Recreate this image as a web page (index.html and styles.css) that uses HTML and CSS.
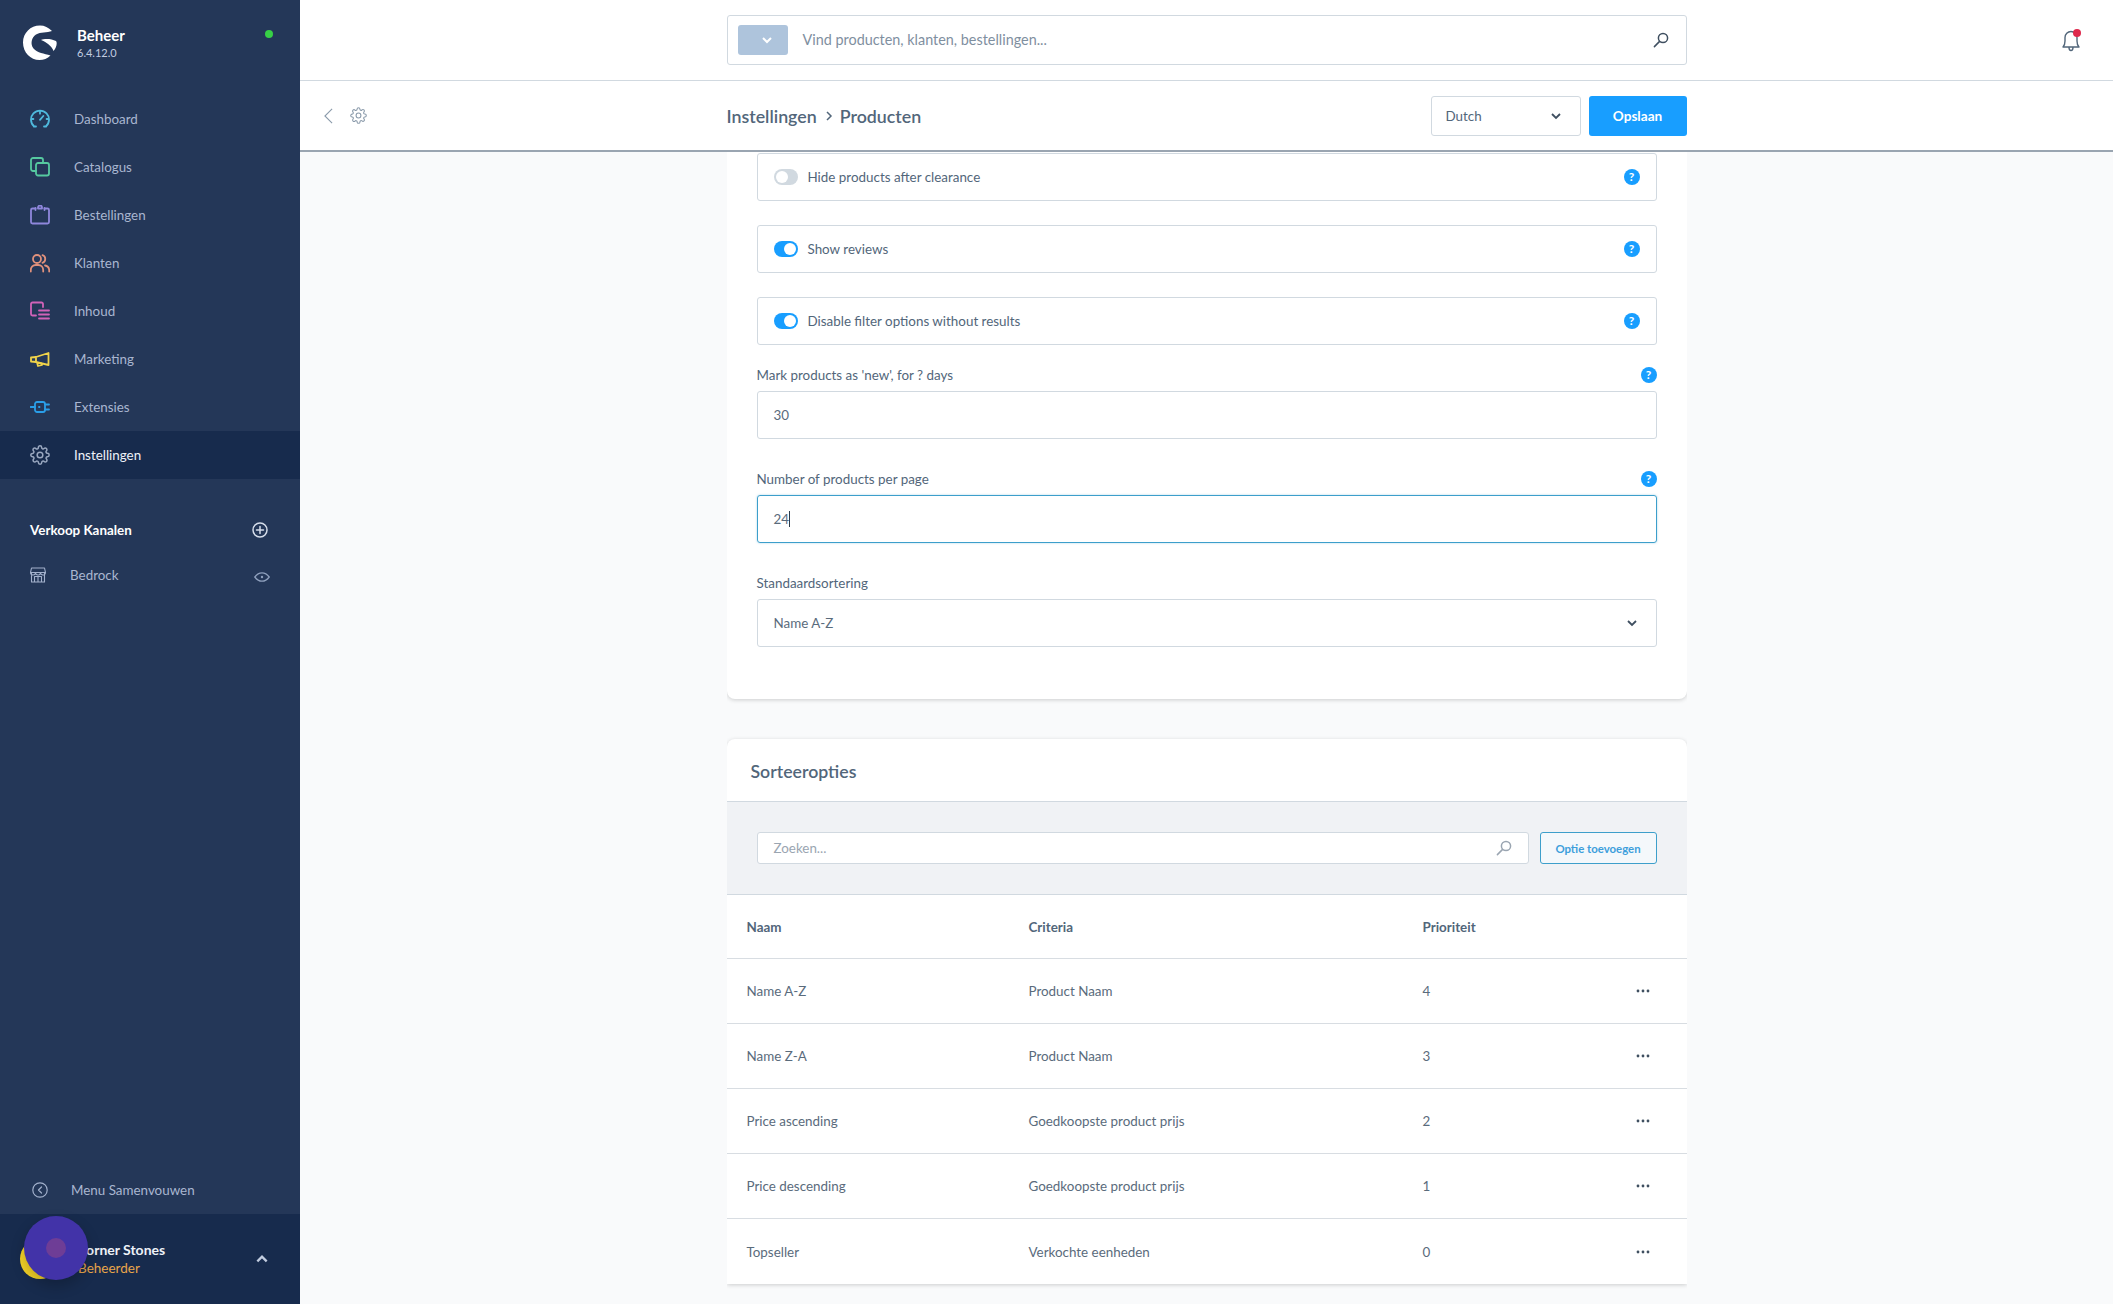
FILE: index.html
```html
<!DOCTYPE html>
<html lang="nl">
<head>
<meta charset="utf-8">
<title>Instellingen - Producten</title>
<link rel="stylesheet" href="styles.css">
</head>
<body>
<svg class="defs" width="0" height="0" aria-hidden="true">
  <symbol id="gear" viewBox="0 0 24 24"><circle cx="12" cy="12" r="3.4"/><path d="M19.4 15a1.65 1.65 0 0 0 .33 1.82l.06.06a2 2 0 0 1 0 2.83 2 2 0 0 1-2.83 0l-.06-.06a1.65 1.65 0 0 0-1.82-.33 1.65 1.65 0 0 0-1 1.51V21a2 2 0 0 1-2 2 2 2 0 0 1-2-2v-.09A1.65 1.65 0 0 0 9 19.4a1.65 1.65 0 0 0-1.82.33l-.06.06a2 2 0 0 1-2.83 0 2 2 0 0 1 0-2.83l.06-.06a1.65 1.65 0 0 0 .33-1.82 1.65 1.65 0 0 0-1.51-1H3a2 2 0 0 1-2-2 2 2 0 0 1 2-2h.09A1.65 1.65 0 0 0 4.6 9a1.65 1.65 0 0 0-.33-1.82l-.06-.06a2 2 0 0 1 0-2.83 2 2 0 0 1 2.83 0l.06.06a1.65 1.65 0 0 0 1.82.33H9a1.65 1.65 0 0 0 1-1.51V3a2 2 0 0 1 2-2 2 2 0 0 1 2 2v.09a1.65 1.65 0 0 0 1 1.51 1.65 1.65 0 0 0 1.82-.33l.06-.06a2 2 0 0 1 2.83 0 2 2 0 0 1 0 2.83l-.06.06a1.65 1.65 0 0 0-.33 1.82V9a1.65 1.65 0 0 0 1.51 1H21a2 2 0 0 1 2 2 2 2 0 0 1-2 2h-.09a1.65 1.65 0 0 0-1.51 1z"/></symbol>
  <symbol id="chev" viewBox="0 0 12 12"><path d="M2 4l4 4 4-4"/></symbol>
  <symbol id="mag" viewBox="0 0 16 16"><circle cx="10" cy="6" r="4.6"/><path d="M6.6 9.4L1.4 14.6"/></symbol>
  <symbol id="dots" viewBox="0 0 14 4"><circle cx="2" cy="2" r="1.4"/><circle cx="7" cy="2" r="1.4"/><circle cx="12" cy="2" r="1.4"/></symbol>
</svg>

<div class="app">
  <aside class="sidebar">
    <div class="brand">
      <svg class="logo" viewBox="0 0 34 35" aria-hidden="true"><path d="M29 6C25.500 2.500 21.500 .5 17 .5 7.500 .5 0 8 0 17.500 0 27.500 7.500 35 16.500 35 20.500 35 24.500 33.500 27.500 30.500 21 28.500 14.500 28 10.500 23.500 7 19 8.500 12.500 13 9.500 17.500 6.800 24 8 29 6Z"/><path d="M18 15C21 13.400 28.500 13.500 33 16 34.500 17.500 33.500 23 30.500 26 28.500 20.500 23 17 18 15Z"/></svg>
      <div class="brand-text">
        <div class="brand-name">Beheer</div>
        <div class="brand-version">6.4.12.0</div>
      </div>
      <span class="status-dot"></span>
    </div>
    <nav class="nav">
      <a class="nav-item"><svg class="nav-icon i-cyan" viewBox="0 0 20 20"><path d="M4.200 17.500A9 9 0 1 1 15.800 17.500M3.800 17.500H6M14 17.500h2.200M10 10.800l3.300-3.800M10 3.200v1.500M3.400 10H2M18 10h-1.400"/></svg><span>Dashboard</span></a>
      <a class="nav-item"><svg class="nav-icon i-teal" viewBox="0 0 20 20"><path d="M6 14H3a2 2 0 0 1-2-2V3a2 2 0 0 1 2-2h8a2 2 0 0 1 2 2v3"/><rect x="6" y="6" width="13" height="12.500" rx="2"/></svg><span>Catalogus</span></a>
      <a class="nav-item"><svg class="nav-icon i-purple" viewBox="0 0 20 20"><path d="M5.500 3.500H2.500a1.500 1.500 0 0 0-1.500 1.500v12a1.500 1.500 0 0 0 1.500 1.500h15a1.500 1.500 0 0 0 1.500-1.500V5a1.500 1.500 0 0 0-1.500-1.500h-3M8 3.500h4M8 3.500V2.500a2 2 0 0 1 4 0v1"/><path d="M5.500 3v2M14.500 3v2"/></svg><span>Bestellingen</span></a>
      <a class="nav-item"><svg class="nav-icon i-orange" viewBox="0 0 20 20"><circle cx="7" cy="6" r="4"/><path d="M.8 18.500v-1.500a5 5 0 0 1 5-5h2.400a5 5 0 0 1 5 5v1.500M12.500 2.200a4 4 0 0 1 0 7.600M15 12.500a5 5 0 0 1 4.200 4.500v1.500"/></svg><span>Klanten</span></a>
      <a class="nav-item"><svg class="nav-icon i-pink" viewBox="0 0 20 20"><path d="M13 6V3a1.500 1.500 0 0 0-1.500-1.500H2.500A1.500 1.500 0 0 0 1 3v10a1.500 1.500 0 0 0 1.500 1.500H6M9 9.500h10M9 13.500h10M9 17.500h10"/></svg><span>Inhoud</span></a>
      <a class="nav-item"><svg class="nav-icon i-yellow" viewBox="0 0 20 20"><path d="M1 8.500l5-.5 12.500-4v12L6 13l-5-.5zM6 8v5M7 13.500l1 3.500 4-1-.8-2"/></svg><span>Marketing</span></a>
      <a class="nav-item"><svg class="nav-icon i-blue" viewBox="0 0 20 20"><rect x="5" y="5" width="10" height="10" rx="2"/><path d="M.5 10H5M15 7.500h4M15 12.500h4"/><path d="M9 10h.5"/></svg><span>Extensies</span></a>
      <a class="nav-item active"><svg class="nav-icon i-gear"><use href="#gear"/></svg><span>Instellingen</span></a>
    </nav>
    <div class="channels-head">
      <span>Verkoop Kanalen</span>
      <svg class="plus" viewBox="0 0 16 16"><circle cx="8" cy="8" r="7"/><path d="M8 4.500v7M4.500 8h7"/></svg>
    </div>
    <div class="channel">
      <svg class="store" viewBox="0 0 16 16"><path d="M1.500 1h13l1 4.500H.5zM1.500 5.500v9.500h13V5.500M.5 5.500a2.500 2.500 0 0 0 5 0 2.500 2.500 0 0 0 5 0 2.500 2.500 0 0 0 5 0M4.500 15V9.500h7V15M8 9.500V15"/></svg>
      <span class="channel-name">Bedrock</span>
      <svg class="eye" viewBox="0 0 16 10"><path d="M.8 5C3 2 5.300.8 8 .8S13 2 15.200 5C13 8 10.700 9.200 8 9.200S3 8 .8 5z"/><circle cx="8" cy="5" r="1.200" class="eye-pupil"/></svg>
    </div>
    <div class="spacer"></div>
    <div class="collapse">
      <svg class="collapse-icon" viewBox="0 0 16 16"><circle cx="8" cy="8" r="7.200"/><path d="M9.500 5L6.500 8l3 3"/></svg>
      <span>Menu Samenvouwen</span>
    </div>
    <div class="user">
      <span class="avatar"></span>
      <div class="user-text">
        <div class="user-name">Corner Stones</div>
        <div class="user-role">Beheerder</div>
      </div>
      <svg class="user-chev" viewBox="0 0 12 12"><path d="M2 8l4-4 4 4"/></svg>
    </div>
    <div class="touch"><span class="touch-core"></span></div>
  </aside>

  <main class="main">
    <header class="topbar">
      <div></div>
      <div class="search">
        <span class="search-type"><svg class="search-type-chev"><use href="#chev"/></svg></span>
        <span class="search-text">Vind producten, klanten, bestellingen...</span>
        <svg class="icon-mag dark"><use href="#mag"/></svg>
      </div>
      <div class="bell-cell">
        <span class="bell">
          <svg class="bell-svg" viewBox="0 0 20 24"><path d="M2 19c1.500-1.500 2-3 2-6V9.500a6 6 0 0 1 12 0V13c0 3 .5 4.500 2 6zM8 19.500c0 4 4 4 4 0"/></svg>
          <span class="bell-dot"></span>
        </span>
      </div>
    </header>

    <div class="smartbar">
      <div class="smart-left">
        <svg class="back" viewBox="0 0 12 20"><path d="M10 2L2 10l8 8"/></svg>
        <svg class="smart-gear"><use href="#gear"/></svg>
      </div>
      <div class="smart-center">
        <div class="crumbs">
          <span>Instellingen</span>
          <svg class="crumb-sep" viewBox="0 0 8 12"><path d="M2 2l4 4-4 4"/></svg>
          <span class="crumb-current">Producten</span>
        </div>
        <div class="lang"><span>Dutch</span><svg class="chev"><use href="#chev"/></svg></div>
        <button class="save">Opslaan</button>
      </div>
      <div></div>
    </div>

    <div class="content">
      <section class="card card-form">
        <div class="switch-box"><span class="toggle"></span><span class="switch-label">Hide products after clearance</span><span class="help">?</span></div>
        <div class="switch-box"><span class="toggle on"></span><span class="switch-label">Show reviews</span><span class="help">?</span></div>
        <div class="switch-box"><span class="toggle on"></span><span class="switch-label">Disable filter options without results</span><span class="help">?</span></div>

        <div class="field first">
          <div class="field-label"><span>Mark products as 'new', for ? days</span><span class="help">?</span></div>
          <div class="input"><span>30</span></div>
        </div>
        <div class="field">
          <div class="field-label"><span>Number of products per page</span><span class="help">?</span></div>
          <div class="input focus"><span class="caret">24</span></div>
        </div>
        <div class="field">
          <div class="field-label"><span>Standaardsortering</span></div>
          <div class="input select"><span>Name A-Z</span><svg class="chev"><use href="#chev"/></svg></div>
        </div>
      </section>

      <section class="card card-table">
        <h2 class="card-title">Sorteeropties</h2>
        <div class="toolbar">
          <div class="tool-search"><span>Zoeken...</span><svg class="icon-mag"><use href="#mag"/></svg></div>
          <button class="add">Optie toevoegen</button>
        </div>
        <div class="row head"><span>Naam</span><span>Criteria</span><span>Prioriteit</span><span></span></div>
        <div class="row"><span>Name A-Z</span><span>Product Naam</span><span>4</span><svg class="dots"><use href="#dots"/></svg></div>
        <div class="row"><span>Name Z-A</span><span>Product Naam</span><span>3</span><svg class="dots"><use href="#dots"/></svg></div>
        <div class="row"><span>Price ascending</span><span>Goedkoopste product prijs</span><span>2</span><svg class="dots"><use href="#dots"/></svg></div>
        <div class="row"><span>Price descending</span><span>Goedkoopste product prijs</span><span>1</span><svg class="dots"><use href="#dots"/></svg></div>
        <div class="row last"><span>Topseller</span><span>Verkochte eenheden</span><span>0</span><svg class="dots"><use href="#dots"/></svg></div>
      </section>
    </div>
  </main>
</div>
</body>
</html>
```
FILE: styles.css
```css
* { box-sizing: border-box; }
html, body { margin: 0; height: 100%; overflow: hidden; }
body { font-family: "Lato", "Noto Sans", sans-serif; font-size: 13.4px; color: #52667a; background: #f9fafb; }
.defs { position: absolute; }
svg { display: block; flex: none; }

.app { display: flex; height: 1304px; }

/* sidebar */
.sidebar { position: relative; width: 300px; flex: none; display: flex; flex-direction: column; background: #243758; color: #a9b6d0; }
.brand { height: 95px; display: flex; padding: 25px 0 0 23px; position: relative; }
.logo { width: 34px; height: 35px; fill: #fff; }
.brand-text { margin-left: 20px; }
.brand-name { color: #fff; font-size: 15px; font-weight: 700; line-height: 20px; }
.brand-version { color: #c2cde0; font-size: 11px; line-height: 14px; margin-top: 1px; }
.status-dot { position: absolute; left: 265px; top: 30px; width: 8px; height: 8px; border-radius: 50%; background: #37d046; }

.nav { display: flex; flex-direction: column; }
.nav-item { height: 48px; display: flex; align-items: center; padding-left: 30px; gap: 24px; }
.nav-item.active { background: #172b4d; color: #eef2f8; }
.nav-icon { width: 20px; height: 20px; fill: none; stroke-width: 1.8; stroke-linecap: round; stroke-linejoin: round; }
.i-cyan { stroke: #4fb9dd; }
.i-teal { stroke: #56c9a0; }
.i-purple { stroke: #8f87dc; }
.i-orange { stroke: #e0917c; }
.i-pink { stroke: #d163b8; }
.i-yellow { stroke: #f0d34a; }
.i-blue { stroke: #2a9ee8; }
.i-gear { stroke: #9aa8c0; }

.channels-head { margin-top: 39px; height: 24px; padding: 0 32px 0 30px; display: flex; justify-content: space-between; align-items: center; color: #fff; font-weight: 700; }
.plus { width: 16px; height: 16px; fill: none; stroke: #d6deeb; stroke-width: 1.5; stroke-linecap: round; }
.channel { margin-top: 21px; height: 24px; padding: 0 30px; display: flex; align-items: center; }
.store { width: 16px; height: 16px; fill: none; stroke: #a3b1cc; stroke-width: 1.1; stroke-linejoin: round; }
.channel-name { margin-left: 24px; flex: 1; }
.eye { width: 16px; height: 10px; fill: none; stroke: #8fa0bd; stroke-width: 1.3; margin-top: 3px; }
.eye-pupil { fill: #8fa0bd; stroke: none; }
.spacer { flex: 1; }

.collapse { height: 48px; display: flex; align-items: center; padding-left: 32px; gap: 23px; }
.collapse-icon { width: 16px; height: 16px; fill: none; stroke: #a3b1cc; stroke-width: 1.2; stroke-linecap: round; stroke-linejoin: round; }
.user { height: 90px; background: #172b4d; display: flex; align-items: center; padding: 0 31px 0 20px; }
.avatar { width: 40px; height: 40px; border-radius: 50%; background: #f5d327; margin-top: 0; }
.user-text { margin-left: 17px; flex: 1; }
.user-name { color: #eef2f8; font-weight: 700; font-size: 14px; line-height: 18px; }
.user-role { color: #e8a54a; font-size: 13.5px; line-height: 18px; padding-left: 1px; }
.user-chev { width: 14px; height: 14px; fill: none; stroke: #c2cde0; stroke-width: 2; }
.touch { position: absolute; left: 24px; top: 1216px; width: 64px; height: 64px; border-radius: 50%; background: #4233a8; box-shadow: 0 6px 14px rgba(0,0,0,.22); display: flex; align-items: center; justify-content: center; }
.touch-core { width: 20px; height: 20px; border-radius: 50%; background: #6e3d96; }

/* main */
.main { flex: 1; min-width: 0; display: flex; flex-direction: column; height: 1304px; }
.topbar { height: 81px; flex: none; background: #fff; border-bottom: 1px solid #d1d9e0; display: grid; grid-template-columns: 1fr 960px 1fr; align-items: center; padding-bottom: 1px; }
.search { height: 50px; border: 1px solid #d1d9e0; border-radius: 3px; display: flex; align-items: center; padding: 0 17px 0 10px; }
.search-type { width: 50px; height: 30px; border-radius: 3px; background: #aec4dc; display: flex; align-items: center; justify-content: flex-end; padding-right: 15px; }
.search-type-chev { width: 12px; height: 12px; fill: none; stroke: #fff; stroke-width: 2; }
.search-text { flex: 1; margin-left: 15px; font-size: 14.4px; color: #7f8f9f; }
.icon-mag { width: 16px; height: 16px; fill: none; stroke: #9aa5b1; stroke-width: 1.5; stroke-linecap: round; }
.icon-mag.dark { stroke: #3f4f60; }
.bell-cell { display: flex; justify-content: flex-end; padding-right: 32px; }
.bell { position: relative; display: block; width: 20px; height: 24px; }
.bell-svg { width: 20px; height: 24px; fill: none; stroke: #52667a; stroke-width: 1.4; stroke-linejoin: round; }
.bell-dot { position: absolute; top: 1px; right: 0; width: 8px; height: 8px; border-radius: 50%; background: #de294c; }

.smartbar { height: 71px; flex: none; background: #fff; border-bottom: 2px solid #9aa5b1; display: grid; grid-template-columns: 1fr 960px 1fr; align-items: center; }
.smart-left { display: flex; align-items: center; padding-left: 23px; gap: 16px; }
.back { width: 11px; height: 18px; fill: none; stroke: #8a9aaa; stroke-width: 1.2; }
.smart-gear { width: 17px; height: 17px; fill: none; stroke: #8a9aaa; stroke-width: 1.5; }
.smart-center { display: flex; align-items: center; }
.crumbs { flex: 1; display: flex; align-items: center; font-size: 17.8px; font-weight: 600; color: #52667a; }
.crumb-sep { width: 8px; height: 12px; margin: 0 7px 0 8px; fill: none; stroke: #52667a; stroke-width: 1.5; }
.lang { width: 150px; height: 40px; border: 1px solid #d1d9e0; border-radius: 3px; display: flex; align-items: center; justify-content: space-between; padding: 0 18px 0 14px; color: #52667a; }
.chev { width: 12px; height: 12px; fill: none; stroke: #3f4f60; stroke-width: 1.8; }
.save { width: 98px; height: 40px; margin-left: 8px; border: 0; border-radius: 3px; background: #189eff; color: #fff; font: 700 13.6px "Lato", sans-serif; }

.content { flex: 1; min-height: 0; overflow: hidden; width: 960px; margin: 0 auto; }
.card { background: #fff; box-shadow: 0 1px 4px rgba(0,0,0,.18); }
.card-form { padding: 1px 30px 52px; border-radius: 0 0 8px 8px; }
.card-table { margin-top: 40px; border-radius: 8px 8px 0 0; }

.switch-box { height: 48px; border: 1px solid #d1d9e0; border-radius: 3px; display: flex; align-items: center; padding: 0 16px; margin-bottom: 24px; }
.switch-label { flex: 1; margin-left: 10px; }
.toggle { width: 24px; height: 16px; border-radius: 8px; background: #d1d9e0; position: relative; }
.toggle::after { content: ""; position: absolute; left: 2px; top: 2px; width: 12px; height: 12px; border-radius: 50%; background: #fff; }
.toggle.on { background: #189eff; }
.toggle.on::after { left: 10px; }
.help { width: 16px; height: 16px; border-radius: 50%; background: #189eff; color: #fff; font-size: 12px; font-weight: 700; line-height: 16px; text-align: center; }

.field { margin-top: 30px; }
.field.first { margin-top: -4px; }
.field-label { height: 20px; line-height: 20px; margin-bottom: 6px; display: flex; justify-content: space-between; align-items: center; }
.input { height: 48px; border: 1px solid #d1d9e0; border-radius: 3px; display: flex; align-items: center; padding: 0 16px; justify-content: space-between; color: #5a6b7c; }
.input.focus { border-color: #3d9fcb; box-shadow: 0 0 2px rgba(61,159,203,.5); }
.caret { border-right: 1px solid #2b3b4b; padding-right: 0; }
.select .chev { margin-right: 2px; }

.card-title { margin: 0; height: 63px; padding: 0 24px; border-bottom: 1px solid #d1d9e0; font-size: 17.7px; font-weight: 600; line-height: 66px; color: #52667a; }
.toolbar { height: 93px; background: #f0f2f5; border-bottom: 1px solid #d1d9e0; padding: 30px 30px 0; display: flex; gap: 11px; }
.tool-search { flex: 1; height: 32px; background: #fff; border: 1px solid #d1d9e0; border-radius: 3px; display: flex; align-items: center; justify-content: space-between; padding: 0 16px 0 16px; color: #9aa5b1; }
.add { width: 117px; height: 32px; border: 1px solid #3d9fcb; border-radius: 3px; background: #f4f8fb; color: #3d9fdc; font: 700 11.4px "Lato", sans-serif; padding: 0; }

.row { height: 65px; padding-left: 20px; border-bottom: 1px solid #d8dde2; display: grid; grid-template-columns: 282px 394px 1fr 51px; align-items: center; color: #5a6b7c; }
.row.head { height: 64px; font-weight: 700; color: #52667a; }
.row.last { border-bottom: 0; }
.dots { width: 14px; height: 4px; fill: #3f4f60; }
```
